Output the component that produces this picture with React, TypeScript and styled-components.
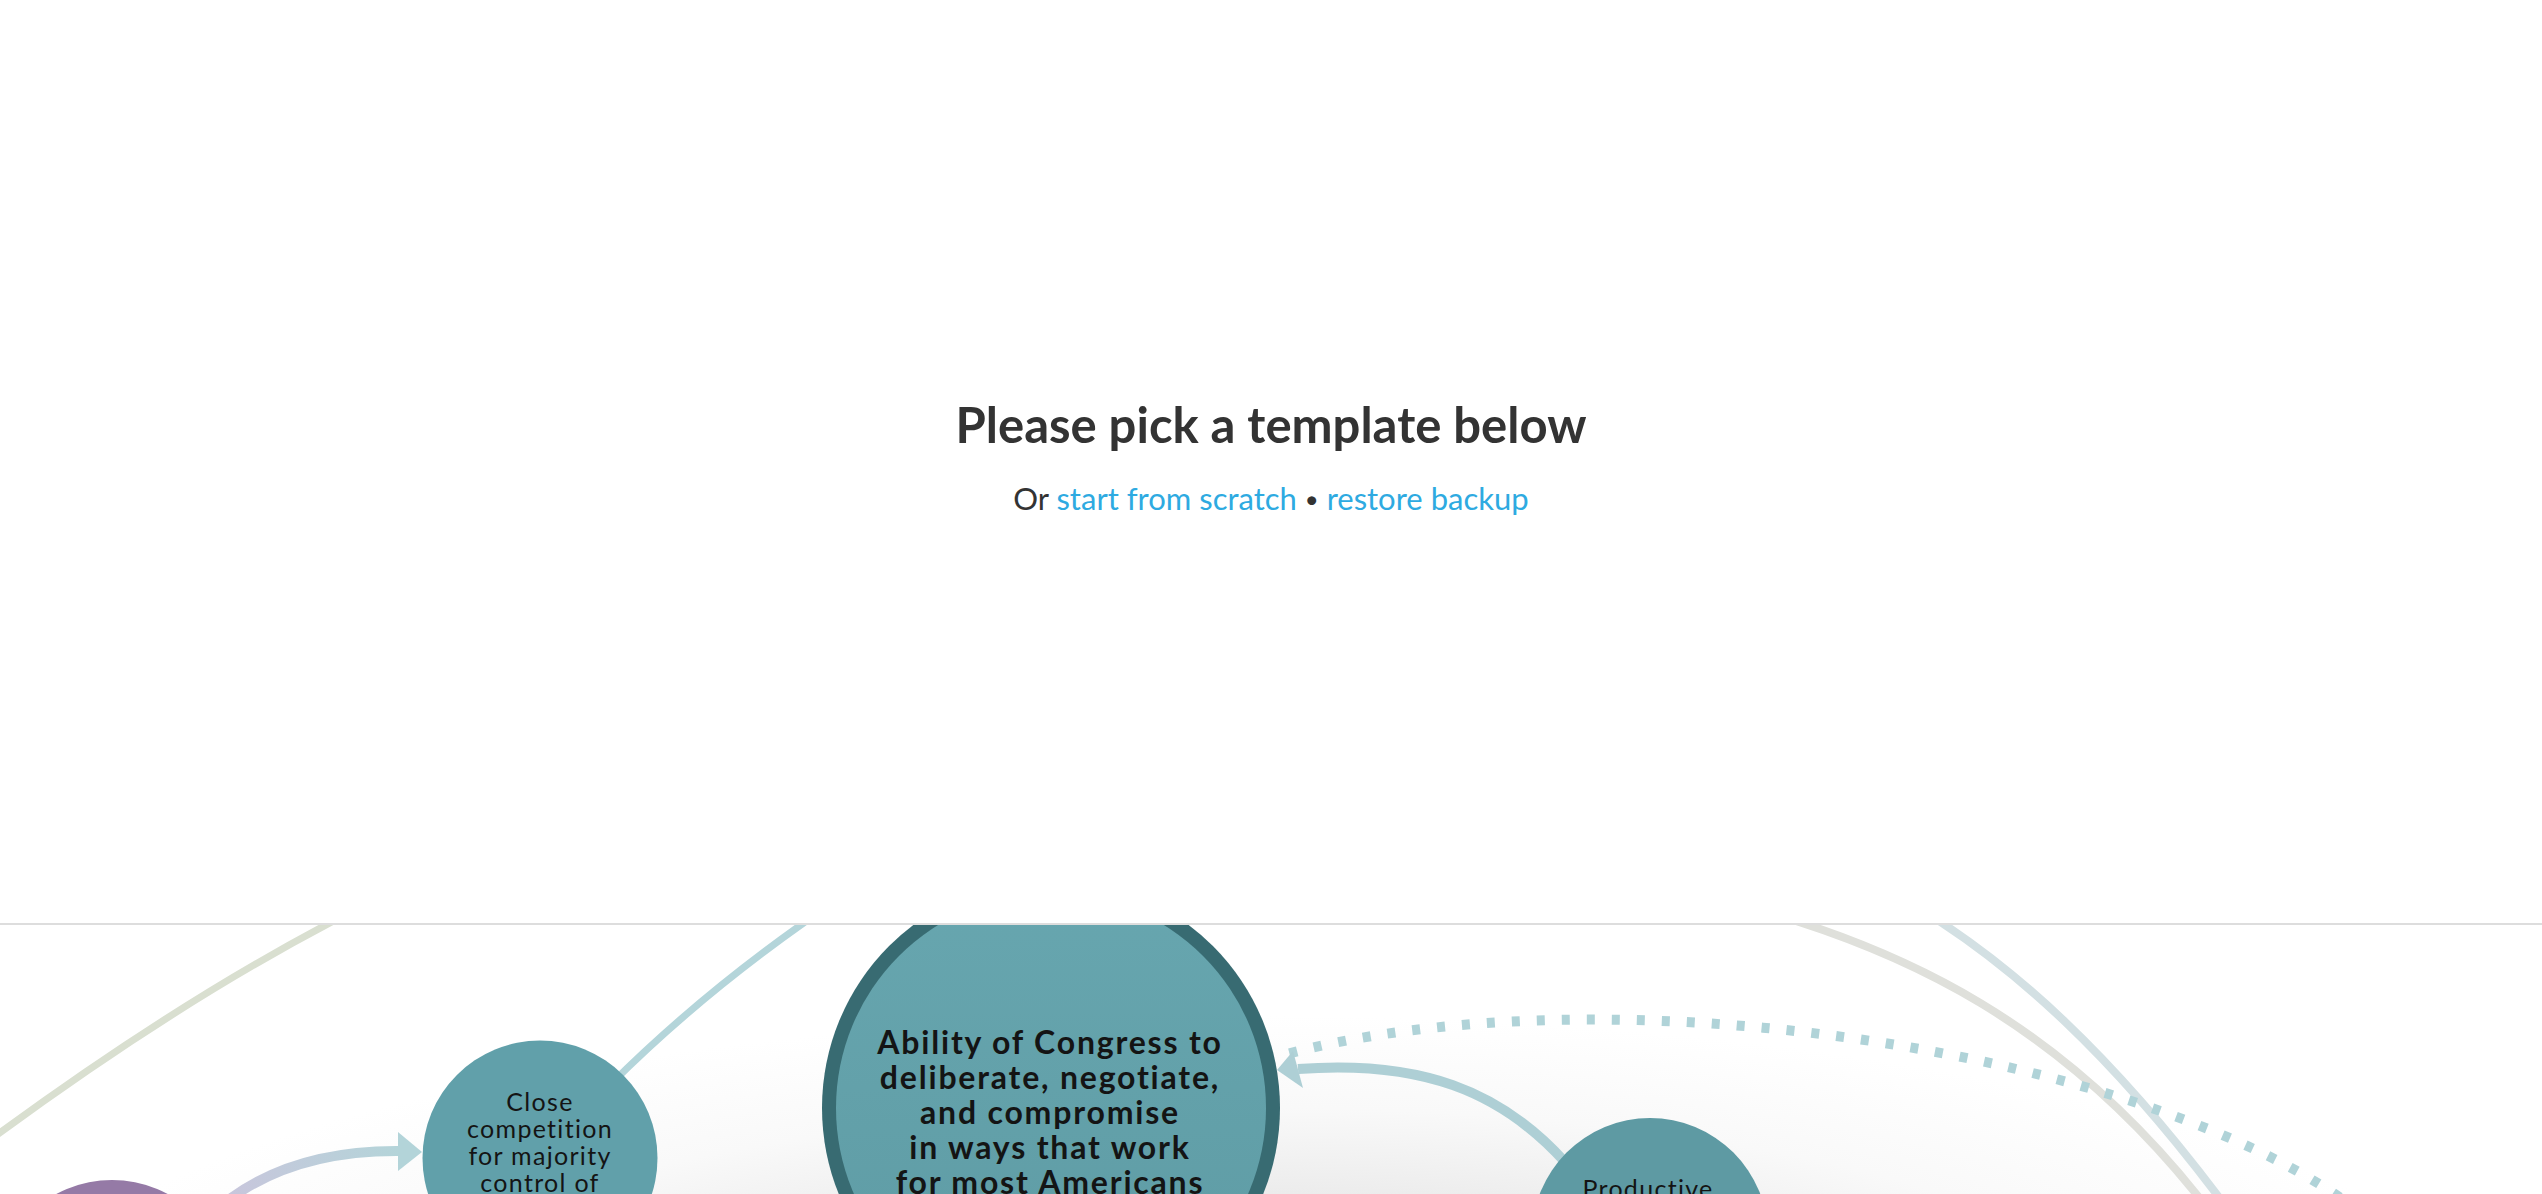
import React from "react";
import styled, { createGlobalStyle } from "styled-components";

const GlobalStyle = createGlobalStyle`
  html, body {
    margin: 0;
    padding: 0;
    background: #ffffff;
    overflow: hidden;
  }
  body {
    font-family: Lato, "Liberation Sans", Arial, sans-serif;
  }
`;

const Page = styled.div`
  display: flex;
  flex-direction: column;
  width: 100%;
  height: 100vh;
`;

const Intro = styled.section`
  flex: none;
  height: 923px;
  box-sizing: border-box;
  padding-top: 395px;
  display: flex;
  flex-direction: column;
  align-items: center;
`;

const Title = styled.h1`
  margin: 0;
  font-family: Lato, "Liberation Sans", Arial, sans-serif;
  font-weight: 700;
  font-size: 49px;
  line-height: 1.2;
  color: #333333;
`;

const Subtitle = styled.p`
  margin: 26px 0 0;
  font-family: Lato, "Liberation Sans", Arial, sans-serif;
  font-weight: 400;
  font-size: 31px;
  line-height: 1.2;
  color: #333333;
`;

const TextLink = styled.a`
  color: #2eaae1;
  text-decoration: none;
  cursor: pointer;
`;

const Bullet = styled.span`
  font-size: 24px;
  vertical-align: 2px;
`;

const Preview = styled.section`
  flex: 1;
  min-height: 0;
  overflow: hidden;
  border-top: 2px solid #dddddd;
  background: radial-gradient(
    ellipse 1250px 330px at 1250px 420px,
    #dcdcdc 0%,
    #e9e9e9 40%,
    #f9f9f9 72%,
    #ffffff 100%
  );
`;

const Diagram = styled.svg`
  display: block;
  width: 2542px;
  height: 600px;
`;

const Link = styled.path<{ $color: string; $width: number; $dash?: string }>`
  fill: none;
  stroke: ${(p) => p.$color};
  stroke-width: ${(p) => p.$width}px;
  stroke-dasharray: ${(p) => p.$dash ?? "none"};
`;

const Head = styled.polygon<{ $color: string }>`
  fill: ${(p) => p.$color};
`;

const Node = styled.circle<{ $fill: string }>`
  fill: ${(p) => p.$fill};
`;

const Label = styled.text<{ $size: number; $bold?: boolean }>`
  font-family: Lato, "Liberation Sans", Arial, sans-serif;
  font-size: ${(p) => p.$size}px;
  font-weight: ${(p) => (p.$bold ? 700 : 400)};
  letter-spacing: ${(p) => (p.$bold ? "1.8px" : "1.3px")};
  fill: #141414;
  text-anchor: middle;
`;

type NodeText = { x: number; y: number; lines: string[]; lh: number; size: number; bold?: boolean };

const NodeLabel = ({ x, y, lines, lh, size, bold }: NodeText) => (
  <Label $size={size} $bold={bold}>
    {lines.map((l, i) => (
      <tspan key={i} x={x} y={y + i * lh}>
        {l}
      </tspan>
    ))}
  </Label>
);

export default function App() {
  return (
    <>
      <GlobalStyle />
      <Page>
        <Intro>
          <Title>Please pick a template below</Title>
          <Subtitle>
            Or <TextLink>start from scratch</TextLink> <Bullet>•</Bullet> <TextLink>restore backup</TextLink>
          </Subtitle>
        </Intro>
        <Preview>
          <Diagram viewBox="0 925 2542 600">
            <defs>
              <linearGradient id="purpleToTeal" gradientUnits="userSpaceOnUse" x1="222" y1="1205" x2="398" y2="1151">
                <stop offset="0" stopColor="#c9c5dc" />
                <stop offset="1" stopColor="#b4d4d9" />
              </linearGradient>
              <linearGradient id="coreFill" x1="0" y1="0" x2="0" y2="1">
                <stop offset="0" stopColor="#67a6af" />
                <stop offset="1" stopColor="#5e9ba4" />
              </linearGradient>
            </defs>

            {/* background curves */}
            <Link d="M 345 915 Q 180 1000 -10 1140" $color="#d9dfd0" $width={7} />
            <Link d="M 610 1085 Q 700 995 815 915" $color="#b4d5da" $width={7} />
            <Link d="M 1760 910 C 1900 950, 2060 1020, 2205 1205" $color="#dfe0db" $width={8} />
            <Link d="M 1925 912 C 2010 965, 2110 1050, 2230 1212" $color="#d3e0e3" $width={8} />

            {/* dotted feedback arrow */}
            <Link
              d="M 2360 1212 C 2150 1050, 1600 965, 1272 1058"
              $color="#b0d3d8"
              $width={10}
              $dash="8 17"
            />

            {/* purple -> close competition */}
            <Link d="M 222 1205 Q 290 1150 400 1151" $color="url(#purpleToTeal)" $width={10} />
            <Head points="398,1132 422,1152 398,1171" $color="#b3d4d9" />

            {/* productive -> congress */}
            <Link d="M 1565 1162 C 1500 1090, 1420 1060, 1298 1069" $color="#aecfd5" $width={10} />
            <Head points="1277,1070 1293,1051 1303,1088" $color="#aecfd5" />

            {/* nodes */}
            <Node cx={112} cy={1298} r={118} $fill="#957aa6" />

            <Node cx={540} cy={1158} r={117.5} $fill="#61a0aa" />
            <NodeLabel
              x={540}
              y={1111}
              lh={27}
              size={25}
              lines={["Close", "competition", "for majority", "control of", "Congress"]}
            />

            <Node cx={1051} cy={1108} r={229} $fill="#386b72" />
            <Node cx={1051} cy={1108} r={215} $fill="url(#coreFill)" />
            <NodeLabel
              x={1050}
              y={1054}
              lh={35}
              size={32}
              bold
              lines={[
                "Ability of Congress to",
                "deliberate, negotiate,",
                "and compromise",
                "in ways that work",
                "for most Americans",
              ]}
            />

            <Node cx={1650} cy={1236} r={118} $fill="#5e9aa3" />
            <NodeLabel x={1648} y={1198} lh={27} size={25} lines={["Productive"]} />
          </Diagram>
        </Preview>
      </Page>
    </>
  );
}
